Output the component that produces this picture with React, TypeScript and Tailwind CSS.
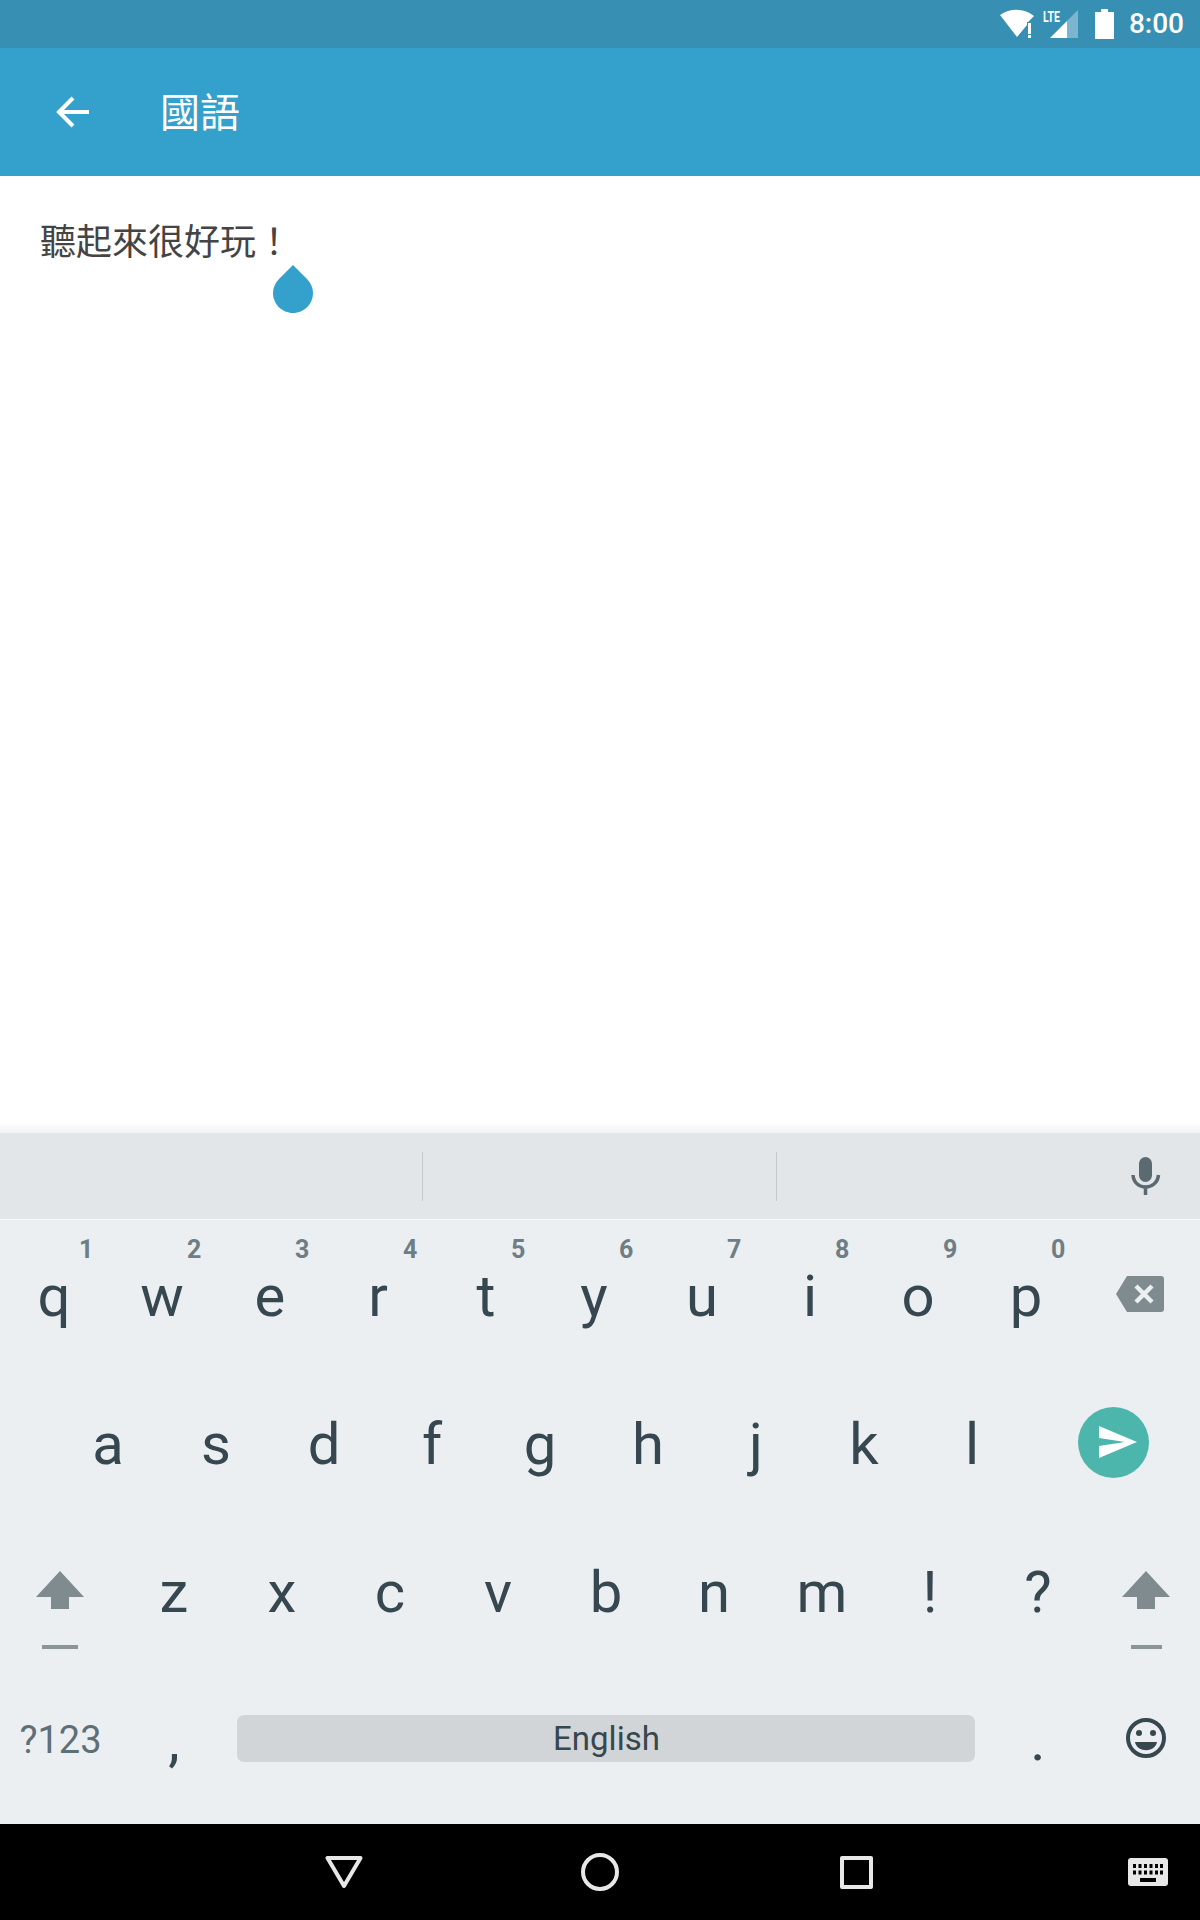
const ROW_ONE = [
  ["q", "1"],
  ["w", "2"],
  ["e", "3"],
  ["r", "4"],
  ["t", "5"],
  ["y", "6"],
  ["u", "7"],
  ["i", "8"],
  ["o", "9"],
  ["p", "0"],
];
const ROW_TWO = ["a", "s", "d", "f", "g", "h", "j", "k", "l"];
const ROW_THREE = ["z", "x", "c", "v", "b", "n", "m", "!", "?"];

function Key({ label, hint }: { label: string; hint?: string }) {
  return (
    <div className="relative flex h-[148px] w-[108px] items-center justify-center pt-[3px] text-[58px] leading-none text-[#37474f]">
      {hint && (
        <span className="absolute left-[79px] top-[17px] text-[25px] leading-[26px] font-bold text-[#6f7d84]">{hint}</span>
      )}
      {label}
    </div>
  );
}

function ShiftKey({ className, dash }: { className: string; dash: string }) {
  return (
    <div className={`flex h-[148px] flex-col items-center pt-[55px] ${className}`}>
      <svg width="48" height="38" viewBox="0 0 48 38" aria-hidden="true">
        <path d="M24 0 48 26H33V38H15V26H0Z" fill="#7f8b8f" />
      </svg>
      <div className={`mt-[36px] h-[4px] bg-[#8a959a] ${dash}`} />
    </div>
  );
}

function StatusBar() {
  return (
    <div className="flex h-[48px] items-center justify-end bg-[#3790b4] pr-[16px]">
      <svg width="37" height="30" viewBox="0 -1 37 30" aria-hidden="true">
        <path d="M0 5C10-2 24-2 34 6L28 12H27V15L17 27Z" fill="#fff" />
        <path d="M28 13H31V24H28ZM28 25H31V28H28Z" fill="#fff" />
      </svg>
      <svg className="ml-[6px]" width="36" height="30" viewBox="0 0 36 30" aria-hidden="true">
        <path d="M24 12 35 1V29H24Z" fill="#fff" fillOpacity="0.35" />
        <path d="M7 29 24 12V29Z" fill="#fff" />
        <text x="0" y="13" fill="#fff" fontSize="15" fontWeight="700" fontFamily="Roboto, sans-serif" textLength="17" lengthAdjust="spacingAndGlyphs">LTE</text>
      </svg>
      <svg className="ml-[16px]" width="19" height="30" viewBox="0 0 19 30" aria-hidden="true">
        <path d="M6 0H13V3H19V30H0V3H6Z" fill="#fff" />
      </svg>
      <span className="ml-[15px] text-[28px] leading-none font-medium text-white">8:00</span>
    </div>
  );
}

function Header() {
  return (
    <header className="flex h-[128px] items-center bg-[#34a0cc]">
      <svg className="ml-[56px]" width="34" height="32" viewBox="0 0 34 32" aria-hidden="true">
        <path d="M33 16H4M17 2 3 16 17 30" fill="none" stroke="#fff" strokeWidth="4" />
      </svg>
      <h1 className="ml-[70px] pt-[3px] text-[40px] leading-none font-normal text-white">國語</h1>
    </header>
  );
}

function Suggestions() {
  return (
    <div className="flex h-[86px] items-center bg-[#e3e6e9]">
      <div className="ml-[422px] h-[49px] w-px bg-[#c4c9cc]" />
      <div className="ml-[353px] h-[49px] w-px bg-[#c4c9cc]" />
      <svg className="ml-[354px]" width="30" height="40" viewBox="0 0 30 40" aria-hidden="true">
        <rect x="8" y="1" width="13" height="25" rx="6.500" fill="#5b6971" />
        <path d="M2 19C3 35 26 35 27.500 19M14.500 30V39" fill="none" stroke="#5b6971" strokeWidth="3.500" />
      </svg>
    </div>
  );
}

function Keyboard() {
  return (
    <div className="flex flex-col bg-[#ebeff2] pb-[12px]">
      <div className="h-px bg-[#f8f9fa]" />
      <div className="flex">
        {ROW_ONE.map(([label, hint]) => (
          <Key key={label} label={label} hint={hint} />
        ))}
        <div className="flex h-[148px] flex-1 items-center justify-center">
          <svg width="48" height="36" viewBox="0 0 48 36" aria-hidden="true">
            <path d="M11 0H45C47 0 48 1 48 3V33C48 35 47 36 45 36H11L0 18Z" fill="#7f8b8f" />
            <path d="M20 10 36 26M36 10 20 26" stroke="#ebeff2" strokeWidth="4.500" />
          </svg>
        </div>
      </div>
      <div className="flex pl-[54px]">
        {ROW_TWO.map((label) => (
          <Key key={label} label={label} />
        ))}
        <div className="flex h-[148px] w-[174px] items-center justify-center">
          <div className="flex h-[71px] w-[71px] items-center justify-center rounded-full bg-[#4db6ac]">
            <svg className="ml-[10px]" width="38" height="32" viewBox="0 0 38 32" aria-hidden="true">
              <path d="M0 0 38 16 0 32V20L26 16 0 12Z" fill="#fff" />
            </svg>
          </div>
        </div>
      </div>
      <div className="flex">
        <ShiftKey className="w-[120px]" dash="w-[36px]" />
        {ROW_THREE.map((label) => (
          <Key key={label} label={label} />
        ))}
        <ShiftKey className="w-[108px]" dash="w-[31px]" />
      </div>
      <div className="flex h-[148px] items-center">
        <div className="w-[120px] pt-[4px] pl-[1px] text-center text-[38px] leading-none text-[#5f6f77]">?123</div>
        <Key label="," />
        <div className="mt-px ml-[9px] flex h-[47px] w-[738px] items-center justify-center rounded-[7px] bg-[#d1d5d8] pl-[1px] text-[33px] leading-none text-[#37474f]">
          English
        </div>
        <div className="ml-[9px]">
          <Key label="." />
        </div>
        <div className="flex w-[108px] items-center justify-center">
          <svg width="40" height="40" viewBox="0 0 40 40" aria-hidden="true">
            <circle cx="20" cy="20" r="18" fill="none" stroke="#37474f" strokeWidth="4" />
            <circle cx="13" cy="15" r="3" fill="#37474f" />
            <circle cx="27" cy="15" r="3" fill="#37474f" />
            <path d="M9 24H31C29 35 11 35 9 24Z" fill="#37474f" />
          </svg>
        </div>
      </div>
    </div>
  );
}

function NavBar() {
  return (
    <div className="flex h-[96px] items-center bg-black pl-[216px]">
      <div className="flex w-[256px] justify-center">
        <svg width="38" height="33" viewBox="0 0 38 33" aria-hidden="true">
          <path d="M2.500 2H35.500L19 30Z" fill="none" stroke="#e8e8e8" strokeWidth="4" strokeLinejoin="round" />
        </svg>
      </div>
      <div className="flex w-[256px] justify-center">
        <div className="h-[38px] w-[38px] rounded-full border-[4px] border-[#e8e8e8]" />
      </div>
      <div className="flex w-[256px] justify-center">
        <div className="h-[33px] w-[33px] rounded-[2px] border-[4px] border-[#e8e8e8]" />
      </div>
      <svg className="ml-[144px]" width="40" height="28" viewBox="0 0 40 28" aria-hidden="true">
        <rect width="40" height="28" rx="3" fill="#e8e8e8" />
        <path d="M5 6H8V10H5ZM10.500 6H13.500V10H10.500ZM16 6H19V10H16ZM21.500 6H24.500V10H21.500ZM27 6H30V10H27ZM32 6H35V10H32ZM5 12.500H8V16.500H5ZM10.500 12.500H13.500V16.500H10.500ZM16 12.500H19V16.500H16ZM21.500 12.500H24.500V16.500H21.500ZM27 12.500H30V16.500H27ZM32 12.500H35V16.500H32ZM12 20H28V24H12Z" fill="#000" />
      </svg>
    </div>
  );
}

export default function App() {
  return (
    <div className="flex h-[1920px] w-[1200px] flex-col overflow-hidden bg-white font-['Roboto','Noto_Sans_CJK_TC',sans-serif]">
      <StatusBar />
      <Header />
      <main className="relative flex-1 px-[40px] pt-[45px]">
        <p className="text-[36px] leading-[44px] text-[#444444]">聽起來很好玩！</p>
        {/* cursor handle */}
        <svg className="absolute left-[273px] top-[89px]" width="40" height="48" viewBox="0 0 40 48" aria-hidden="true">
          <path d="M20 0 34 14C38 18 40 23 40 28 40 39 31 48 20 48 9 48 0 39 0 28 0 23 2 18 6 14Z" fill="#34a0cc" />
        </svg>
      </main>
      <div className="h-[10px] bg-gradient-to-b from-white to-[#f0f1f2]" />
      <Suggestions />
      <Keyboard />
      <NavBar />
    </div>
  );
}
